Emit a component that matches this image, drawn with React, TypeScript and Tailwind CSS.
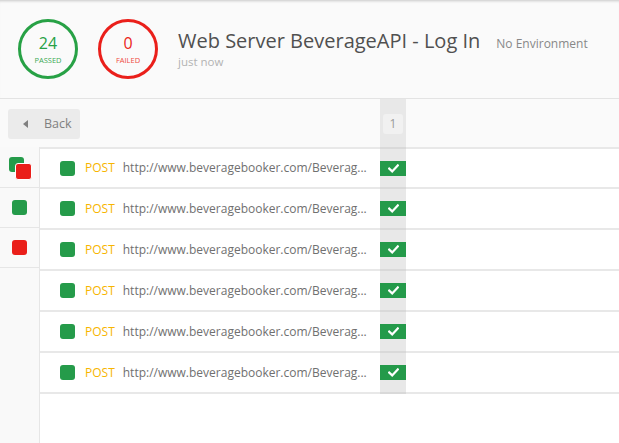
import React from "react";

function Check() {
  return (
    <svg width="11" height="9" viewBox="0 0 11 9" fill="none">
      <path d="M1.2 4.6 L4.2 7.4 L9.8 1.4" stroke="#ffffff" strokeWidth="2.2" strokeLinecap="square" strokeLinejoin="miter" />
    </svg>
  );
}

function Row({ first }: { first?: boolean }) {
  const top = first ? "border-t-2" : "";
  return (
    <div className="flex">
      <div className={`w-[340px] ${top} border-b-2 border-[#e8e8e8] flex items-center pl-[20px] ${first ? "h-[42px]" : "h-[41px]"}`}>
        <div className="w-[15px] h-[15px] rounded-[3px] bg-[#259b4a] shrink-0" />
        <span className="ml-[10px] text-[12px] text-[#f7b500]">POST</span>
        <span className="ml-[8px] text-[12px] text-[#707070] whitespace-nowrap">http://www.beveragebooker.com/Beverag...</span>
      </div>
      <div className={`w-[26px] ${top} ${top ? "border-t-[#d9d9d9]" : ""} border-b-2 border-[#d9d9d9] bg-[#e8e8e8] flex items-center ${first ? "h-[42px]" : "h-[41px]"}`}>
        <div className="w-full h-[15px] bg-[#249a4a] flex items-center justify-center">
          <Check />
        </div>
      </div>
      <div className={`flex-1 ${top} border-b-2 border-[#e8e8e8] ${first ? "h-[42px]" : "h-[41px]"}`} />
    </div>
  );
}

export default function App() {
  const rows = [0, 1, 2, 3, 4, 5];
  return (
    <div className="w-[619px] h-[443px] overflow-hidden bg-[#fafafa] font-['Open_Sans',sans-serif] flex flex-col">
      <header className="h-[99px] shrink-0 border-b border-[#e3e3e3] flex items-center pl-[18px] shadow-[inset_0_3px_3px_-2px_rgba(0,0,0,0.2)]">
        <div className="w-[60px] h-[60px] rounded-full border-[3px] border-[#27a145] flex flex-col items-center justify-center text-[#27a145]">
          <span className="text-[16px] leading-[18px]">24</span>
          <span className="text-[7.5px] leading-[9px] mt-[4px] text-[#3aaa55]">PASSED</span>
        </div>
        <div className="ml-[20px] w-[60px] h-[60px] rounded-full border-[3px] border-[#ea1f1a] flex flex-col items-center justify-center text-[#ea1f1a]">
          <span className="text-[16px] leading-[18px]">0</span>
          <span className="text-[7.5px] leading-[9px] mt-[4px] text-[#ef4a40]">FAILED</span>
        </div>
        <div className="ml-[20px] flex flex-col">
          <div className="flex items-baseline">
            <span className="text-[20px] leading-[24px] text-[#505050]">Web Server BeverageAPI - Log In</span>
            <span className="ml-[16px] text-[12px] text-[#888888]">No Environment</span>
          </div>
          <span className="mt-[2px] text-[11.5px] leading-[14px] text-[#b3b3b3]">just now</span>
        </div>
      </header>
      <div className="flex-1 flex flex-col">
        <div className="h-[48px] shrink-0 flex">
          <div className="w-[380px] pl-[8px] pt-[10px]">
            <div className="w-[72px] h-[30px] rounded-[3px] bg-[#ebebeb] flex items-center">
              <div className="ml-[15px] w-0 h-0 border-t-[4px] border-b-[4px] border-r-[5px] border-t-transparent border-b-transparent border-r-[#808080]" />
              <span className="ml-[16px] text-[12.5px] text-[#808080]">Back</span>
            </div>
          </div>
          <div className="w-[26px] bg-[#e8e8e8] flex justify-center pt-[15px]">
            <div className="w-[20px] h-[20px] rounded-[3px] bg-[#f1f1f1] flex items-center justify-center text-[12px] text-[#9a9a9a]">1</div>
          </div>
          <div className="flex-1" />
        </div>
        <div className="flex-1 flex">
          <div className="w-[40px] shrink-0 border-r border-[#e6e6e6] bg-[#f9f9f9] flex flex-col">
            <div className="h-[41px] border-b border-[#e6e6e6] relative">
              <div className="absolute left-[9px] top-[10px] w-[15px] h-[15px] rounded-[3px] bg-[#259b4a]" />
              <div className="absolute left-[15px] top-[16px] w-[17px] h-[17px] rounded-[3px] bg-[#ea1f1a] border border-white" />
            </div>
            <div className="h-[40px] border-b border-[#e6e6e6] flex items-center justify-center">
              <div className="w-[15px] h-[15px] rounded-[3px] bg-[#259b4a]" />
            </div>
            <div className="h-[40px] border-b border-[#e6e6e6] flex items-center justify-center">
              <div className="w-[15px] h-[15px] rounded-[3px] bg-[#ea1f1a]" />
            </div>
          </div>
          <div className="flex-1 bg-white flex flex-col">
            {rows.map((i) => (
              <Row key={i} first={i === 0} />
            ))}
          </div>
        </div>
      </div>
    </div>
  );
}
